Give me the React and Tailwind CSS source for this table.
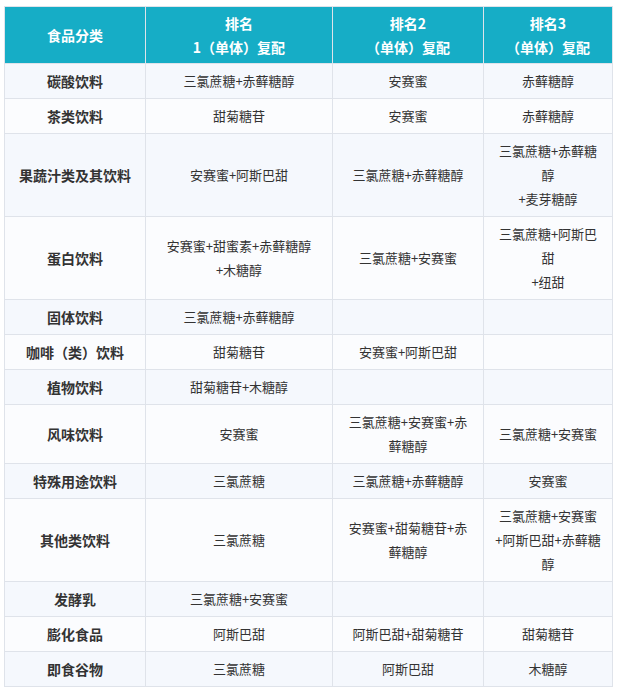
import React from 'react';

const rows = [
  ['碳酸饮料', ['三氯蔗糖+赤藓糖醇'], ['安赛蜜'], ['赤藓糖醇']],
  ['茶类饮料', ['甜菊糖苷'], ['安赛蜜'], ['赤藓糖醇']],
  ['果蔬汁类及其饮料', ['安赛蜜+阿斯巴甜'], ['三氯蔗糖+赤藓糖醇'], ['三氯蔗糖+赤藓糖', '醇', '+麦芽糖醇']],
  ['蛋白饮料', ['安赛蜜+甜蜜素+赤藓糖醇', '+木糖醇'], ['三氯蔗糖+安赛蜜'], ['三氯蔗糖+阿斯巴', '甜', '+纽甜']],
  ['固体饮料', ['三氯蔗糖+赤藓糖醇'], [], []],
  ['咖啡（类）饮料', ['甜菊糖苷'], ['安赛蜜+阿斯巴甜'], []],
  ['植物饮料', ['甜菊糖苷+木糖醇'], [], []],
  ['风味饮料', ['安赛蜜'], ['三氯蔗糖+安赛蜜+赤', '藓糖醇'], ['三氯蔗糖+安赛蜜']],
  ['特殊用途饮料', ['三氯蔗糖'], ['三氯蔗糖+赤藓糖醇'], ['安赛蜜']],
  ['其他类饮料', ['三氯蔗糖'], ['安赛蜜+甜菊糖苷+赤', '藓糖醇'], ['三氯蔗糖+安赛蜜', '+阿斯巴甜+赤藓糖', '醇']],
  ['发酵乳', ['三氯蔗糖+安赛蜜'], [], []],
  ['膨化食品', ['阿斯巴甜'], ['阿斯巴甜+甜菊糖苷'], ['甜菊糖苷']],
  ['即食谷物', ['三氯蔗糖'], ['阿斯巴甜'], ['木糖醇']],
];

const Lines = ({ lines }) =>
  lines.map((l, i) => (
    <React.Fragment key={i}>
      {i > 0 && <br />}
      {l}
    </React.Fragment>
  ));

export default function App() {
  return (
    <div
      className="bg-white min-h-screen pt-[6px] pl-[4px]"
      style={{ fontFamily: '"Noto Sans CJK SC", "Liberation Sans", sans-serif' }}
    >
      <table className="table-fixed border-collapse w-[608px] text-center leading-[24px]">
        <colgroup>
          <col className="w-[141px]" />
          <col className="w-[187px]" />
          <col className="w-[151px]" />
          <col className="w-[129px]" />
        </colgroup>
        <thead>
          <tr className="bg-[#16adc6] text-white font-bold text-[14px]">
            <th className="border border-[#dfe3ea] py-[4px] px-[6px]">食品分类</th>
            <th className="border border-[#dfe3ea] py-[4px] px-[6px]">
              排名
              <br />1（单体）复配
            </th>
            <th className="border border-[#dfe3ea] py-[4px] px-[6px]">
              排名2
              <br />（单体）复配
            </th>
            <th className="border border-[#dfe3ea] py-[4px] px-[6px]">
              排名3
              <br />（单体）复配
            </th>
          </tr>
        </thead>
        <tbody>
          {rows.map((r, i) => (
            <tr key={i} className={i % 2 === 0 ? 'bg-[#f5f8fd]' : 'bg-[#fbfcfe]'}>
              <td className="border border-[#dfe3ea] py-[5px] px-[6px] text-[14px] font-bold text-[#333]">
                {r[0]}
              </td>
              {[r[1], r[2], r[3]].map((c, j) => (
                <td
                  key={j}
                  className="border border-[#dfe3ea] py-[5px] px-[4px] text-[13px] text-[#333] whitespace-nowrap"
                >
                  <Lines lines={c} />
                </td>
              ))}
            </tr>
          ))}
        </tbody>
      </table>
    </div>
  );
}
